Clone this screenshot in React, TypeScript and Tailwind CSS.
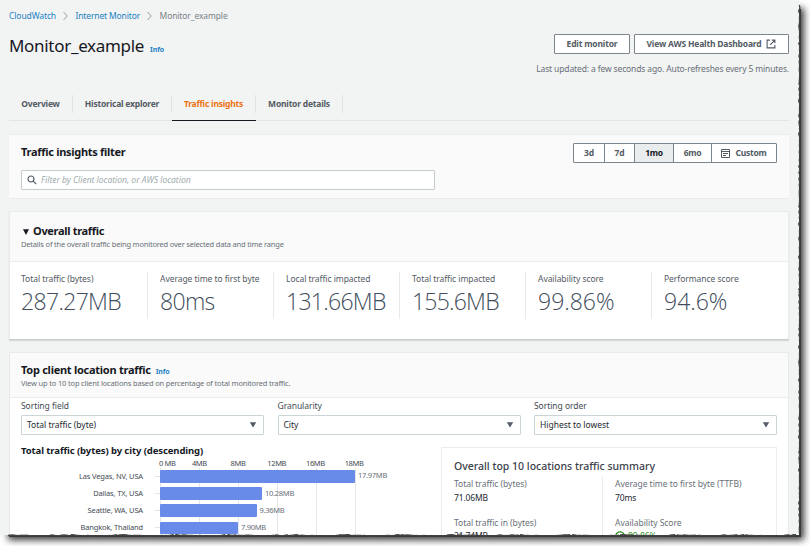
import type { ReactNode } from "react";

const stats = [
  { label: "Total traffic (bytes)", value: "287.27MB", width: "w-[127px]", pad: "pl-0", spacing: "tracking-[-0.029em]" },
  { label: "Average time to first byte", value: "80ms", width: "w-[126px]", pad: "pl-3", spacing: "tracking-[-0.03em]" },
  { label: "Local traffic impacted", value: "131.66MB", width: "w-[126px]", pad: "pl-3", spacing: "tracking-[-0.031em]" },
  { label: "Total traffic impacted", value: "155.6MB", width: "w-[126px]", pad: "pl-3", spacing: "tracking-[-0.034em]" },
  { label: "Availability score", value: "99.86%", width: "w-[126px]", pad: "pl-3", spacing: "tracking-normal" },
  { label: "Performance score", value: "94.6%", width: "w-[126px]", pad: "pl-3", spacing: "tracking-normal" },
];

const bars = [
  { city: "Las Vegas, NV, USA", value: "17.97MB", width: 195 },
  { city: "Dallas, TX, USA", value: "10.28MB", width: 102 },
  { city: "Seattle, WA, USA", value: "9.36MB", width: 96.5 },
  { city: "Bangkok, Thailand", value: "7.90MB", width: 78 },
];

const ticks = ["4MB", "8MB", "12MB", "16MB", "18MB"];
const gridLines = [0, 4, 8, 12, 16, 18];

function Chevron() {
  return (
    <svg className="ml-[7px] mr-[7.5px]" width="5" height="10" viewBox="0 0 5 10" fill="none" stroke="#95a3a5" strokeWidth="1">
      <path d="M.5 1 4.2 5 .5 9" />
    </svg>
  );
}

function Tab({ children, className = "" }: { children: ReactNode; className?: string }) {
  return <div className={"relative flex h-[18px] items-center justify-center border-r border-[#dfe3e3] font-bold " + className}>{children}</div>;
}

function Select({ label, value }: { label: string; value: string }) {
  return (
    <div className="w-[243px]">
      <div className="h-[14px] leading-[14px] tracking-[-0.005em] text-[#444b53]">{label}</div>
      <div className="mt-0.5 flex h-5 items-center justify-between rounded-[1px] border border-[#cbd5d5] bg-white pl-[5px] pr-[6px] tracking-[-0.002em] text-[#24292f]">
        <span>{value}</span>
        <svg width="8" height="6" viewBox="0 0 8 6" fill="#525b66">
          <path d="M.8.3h6.4L4 5.6z" />
        </svg>
      </div>
    </div>
  );
}

function Segment({ children, className = "" }: { children: ReactNode; className?: string }) {
  return <div className={"flex items-center justify-center border-r border-[#7b858e] " + className}>{children}</div>;
}

// Ragged outline of the torn page: small offsets repeated along an edge.
const rag = [0, 0.5, 0.1, -0.4, 0.3, 0.6, 0.1, -0.5, 0.4, 0, -0.7, 0.2, 0.5, -0.1];
const rightEdge = Array.from({ length: 177 }, (_, i) => `${(799.3 + rag[(i * 5 + (i >> 3)) % rag.length]).toFixed(1)},${5 + i * 3}`).join(" ");
const bottomEdge = Array.from({ length: 198 }, (_, i) => `${8 + i * 4},${(535.3 + rag[(i * 3 + (i >> 2)) % rag.length]).toFixed(1)}`).join(" ");

export default function App() {
  return (
    <div className="relative h-[546px] w-[810px] overflow-hidden bg-white font-['Noto_Sans','Open_Sans',sans-serif] text-[8.5px] text-[#545b64]">
      <div className="absolute left-[9px] top-[9px] h-[528px] w-[792px] bg-[#3a3a3a] shadow-[1px_1px_7px_2px_#3a3a3a]" />
      <main className="relative h-[535px] w-[799px] overflow-hidden bg-[#f2f3f3] pl-[9px] pr-[10px]">
        <nav className="flex h-8 items-center text-[#1c82c4]">
          <span className="tracking-[-0.013em]">CloudWatch</span>
          <Chevron />
          <span className="tracking-[-0.017em]">Internet Monitor</span>
          <Chevron />
          <span className="tracking-[-0.014em] text-[#7b8386]">Monitor_example</span>
        </nav>

        <header className="flex h-[63px] justify-between">
          <div className="flex h-7 items-baseline">
            <h1 className="text-[17px] leading-7 tracking-[-0.018em] text-[#16191f]">Monitor_example</h1>
            <span className="ml-1.5 text-[7px] font-bold tracking-[-0.013em] text-[#1c82c4]">Info</span>
          </div>
          <div className="flex flex-col items-end pt-0.5">
            <div className="flex gap-1 font-bold tracking-[-0.022em]">
              <button className="h-5 w-[76px] rounded-[1px] border border-[#7b858e] bg-white">Edit monitor</button>
              <button className="flex h-5 w-[155px] items-center justify-center gap-[5px] rounded-[1px] border border-[#7b858e] bg-white">
                <span>View AWS Health Dashboard</span>
                <svg width="10" height="10" viewBox="0 0 10 10" fill="none" stroke="#545b64" strokeWidth="1.1">
                  <path d="M4 1.1H1.1v7.8h7.8V6M5.8 1.1h3.1v3.1M8.7 1.3 4.2 5.8" />
                </svg>
              </button>
            </div>
            <div className="mt-[9px] leading-3 tracking-[-0.016em] text-[#687078]">Last updated: a few seconds ago. Auto-refreshes every 5 minutes.</div>
          </div>
        </header>

        <div className="flex h-[26px] border-b border-[#e1e5e5] tracking-[-0.025em]">
          <Tab className="w-[64px]">Overview</Tab>
          <Tab className="w-[99px]">Historical explorer</Tab>
          <Tab className="w-[84px] text-[#ec7211]">
            Traffic insights
            <span className="absolute -right-px left-0 top-[25px] h-px bg-[#16191f]" />
          </Tab>
          <Tab className="w-[87px]">Monitor details</Tab>
        </div>

        <section className="mt-[13px] h-[65px] border-y border-[#eaeded] bg-[#fafafa] px-3">
          <div className="flex items-start justify-between pt-2">
            <h2 className="text-[11px] font-bold leading-[18px] tracking-[-0.026em] text-[#16191f]">Traffic insights filter</h2>
            <div className="flex h-5 rounded-[1px] border border-[#7b858e] bg-white font-bold tracking-[-0.028em]">
              <Segment className="w-[31px]">3d</Segment>
              <Segment className="w-[30px]">7d</Segment>
              <Segment className="w-[39px] bg-[#eaeded] text-[#16191f]">1mo</Segment>
              <Segment className="w-[38px]">6mo</Segment>
              <div className="flex w-[64px] items-center justify-center gap-[5px]">
                <svg width="9" height="9" viewBox="0 0 9 9" fill="none" stroke="#545b64">
                  <path d="M.5.5h8v8h-8zM.5 2.5h8M2 4.5h5M2 6.5h3" />
                </svg>
                Custom
              </div>
            </div>
          </div>
          <div className="mt-[7px] flex h-5 w-[414px] items-center rounded-[1px] border border-[#c2cccc] bg-white pl-[5px]">
            <svg width="10" height="10" viewBox="0 0 10 10" fill="none" stroke="#545b64" strokeWidth="1.2">
              <circle cx="4" cy="4" r="3" />
              <path d="m6.2 6.2 3 3" />
            </svg>
            <span className="ml-[4px] italic text-[#a0abad]">Filter by Client location, or AWS location</span>
          </div>
        </section>

        <section className="mt-3 h-[129px] border border-[#e8ebeb] border-b-[#c9cdcd] bg-white shadow-[0_1px_1px_#d5d9d9]">
          <div className="h-[50px] border-b border-[#eaeded] bg-[#fafafa] px-[11px] pt-3">
            <h2 className="flex h-[15px] items-center text-[11px] font-bold tracking-[-0.029em] text-[#16191f]">
              <svg className="ml-[2px] mr-[4px]" width="6" height="6" viewBox="0 0 6 6" fill="#16191f"><path d="M0 .3h6L3 6z" /></svg>
              Overall traffic
            </h2>
            <p className="text-[7.5px] leading-[11px] tracking-[-0.025em] text-[#687078]">Details of the overall traffic being monitored over selected data and time range</p>
          </div>
          <div className="flex px-[11px] pt-2.5">
            {stats.map((s, i) => (
              <div key={s.label} className={`flex h-[47px] shrink-0 flex-col ${s.width} ${s.pad} ${i < 5 ? "border-r border-[#e6eaea]" : ""}`}>
                <div className="leading-[13px] tracking-[-0.006em]">{s.label}</div>
                <div className={`font-['Open_Sans'] text-[23px] font-light leading-[33px] text-[#414d5c] ${s.spacing}`}>{s.value}</div>
              </div>
            ))}
          </div>
        </section>

        <section className="mt-3 h-[220px] border border-[#e8ebeb] bg-white">
          <div className="h-[45px] border-b border-[#eaeded] bg-[#fafafa] px-[11px] pt-[9px]">
            <div className="flex h-[15px] items-baseline">
              <h2 className="text-[11px] font-bold leading-[15px] tracking-[-0.024em] text-[#16191f]">Top client location traffic</h2>
              <span className="ml-[5px] text-[7px] font-bold tracking-[-0.013em] text-[#1c82c4]">Info</span>
            </div>
            <p className="text-[7.5px] leading-3 tracking-[-0.022em] text-[#687078]">View up to 10 top client locations based on percentage of total monitored traffic.</p>
          </div>
          <div className="flex gap-[13.5px] px-[11px] pt-[1px]">
            <Select label="Sorting field" value="Total traffic (byte)" />
            <Select label="Granularity" value="City" />
            <Select label="Sorting order" value="Highest to lowest" />
          </div>

          <div className="flex justify-between px-[11px]">
            <div className="w-[400px] pt-2">
              <h3 className="h-[15px] text-[9.5px] font-bold leading-[15px] tracking-[-0.01em] text-[#16191f]">Total traffic (bytes) by city (descending)</h3>
              <div className="flex h-2.5 pl-[138px] text-[7.5px] leading-2.5 tracking-[-0.05em] text-[#444b53]">
                <div className="w-[21px]">0 MB</div>
                {ticks.map((t) => (
                  <div key={t} className="w-[38.7px] shrink-0 text-center">{t}</div>
                ))}
              </div>
              <div className="relative h-[90px]">
                <div className="absolute left-[139px] top-0 flex">
                  {gridLines.map((g) => (
                    <div key={g} className="h-[90px] w-[39px] shrink-0 border-l border-[#e4e7e8]" />
                  ))}
                </div>
                <div className="relative">
                  {bars.map((b) => (
                    <div key={b.city} className="flex h-[17.1px] items-center text-[7.5px]">
                      <span className="w-[122px] pb-[1px] text-right leading-3 tracking-[-0.021em] text-[#444b53]">{b.city}</span>
                      <span className="ml-[12px] h-px w-[5px] bg-[#e4e7e8]" />
                      <span className="h-[12.5px] rounded-[1px] bg-[#688ae8]" style={{ width: b.width }} />
                      <span className="ml-[3px] pb-[1px] tracking-[-0.035em] text-[#687078]">{b.value}</span>
                    </div>
                  ))}
                </div>
              </div>
            </div>

            <div className="mt-3 h-[120px] w-[336px] border border-[#eaeded] px-3 pt-[11px]">
              <h3 className="text-[10.5px] font-medium leading-[15px] tracking-normal text-[#3a414a]">Overall top 10 locations traffic summary</h3>
              <div className="mt-[3px] grid h-[90px] grid-cols-[149px_1fr] tracking-[-0.004em] text-[#687078]">
                <div className="border-r border-[#eaeded]">
                  <div className="leading-[14px]">Total traffic (bytes)</div>
                  <div className="leading-[13px] tracking-[-0.016em] text-[#24292f]">71.06MB</div>
                  <div className="mt-3 leading-[14px]">Total traffic in (bytes)</div>
                  <div className="leading-[11px] tracking-[-0.016em] text-[#24292f]">31.74MB</div>
                </div>
                <div className="pl-3">
                  <div className="leading-[14px]">Average time to first byte (TTFB)</div>
                  <div className="leading-[13px] tracking-[-0.016em] text-[#24292f]">70ms</div>
                  <div className="mt-3 leading-[14px]">Availability Score</div>
                  <div className="flex items-center gap-[3px] leading-[11px] text-[#2f9420]">
                    <svg width="10" height="10" viewBox="0 0 10 10" fill="none" stroke="#2f9420" strokeWidth="1.3">
                      <circle cx="5" cy="5" r="4.2" />
                      <path d="m3 5 1.5 1.5L7.2 3.6" />
                    </svg>
                    99.86%
                  </div>
                </div>
              </div>
            </div>
          </div>
        </section>
      </main>
      <svg className="absolute left-0 top-0" width="810" height="546" fill="none" stroke="#444" strokeWidth="1.2" strokeDasharray="9 1.5 5 1 13 2">
        <polyline points={rightEdge} />
        <polyline points={bottomEdge} />
      </svg>
    </div>
  );
}
